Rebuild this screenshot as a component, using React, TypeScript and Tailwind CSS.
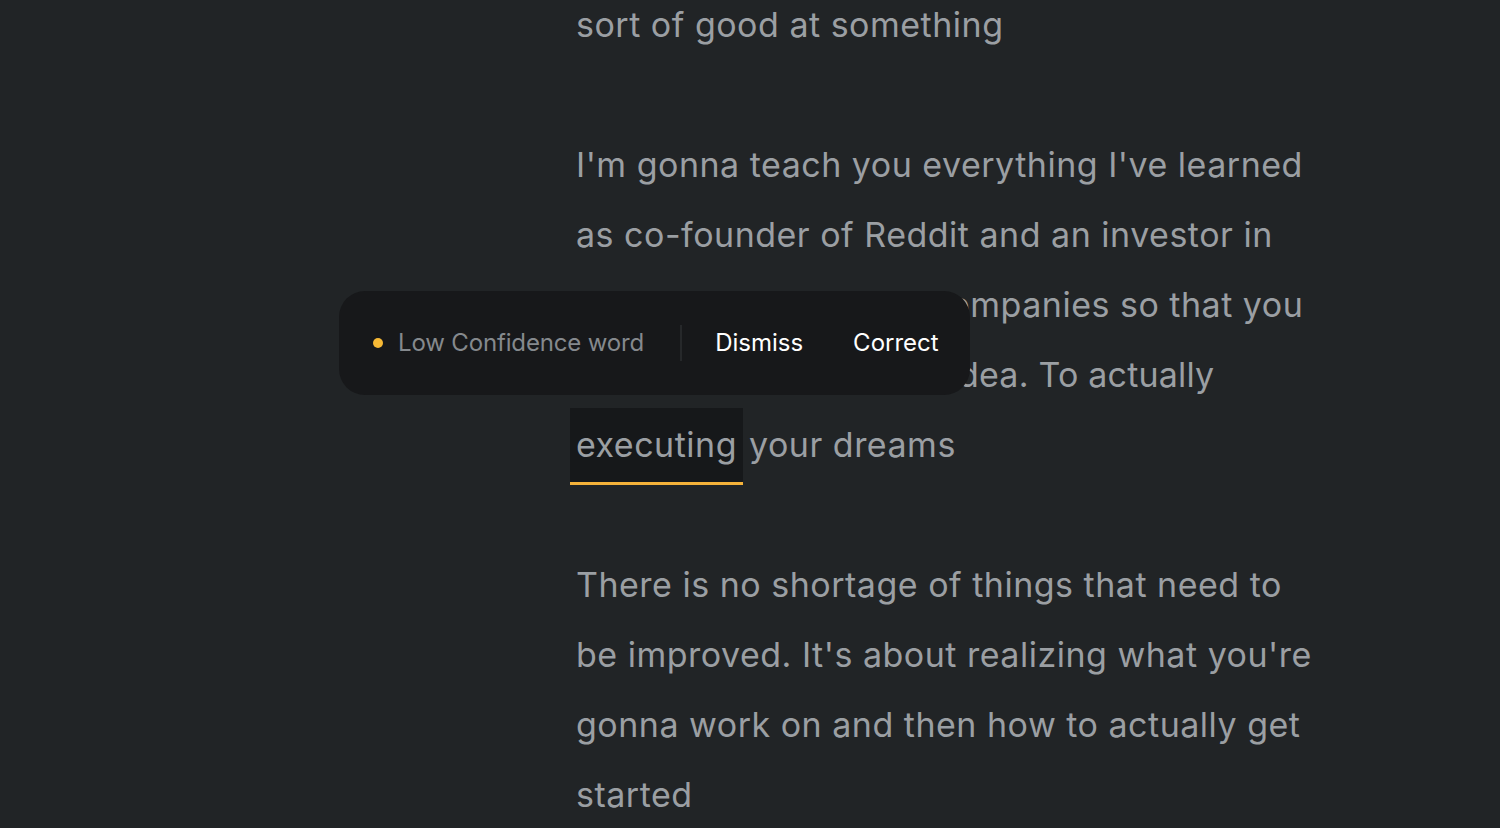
import React from "react";

const P1 = ["sort of good at something"];
const P2a = [
  "I'm gonna teach you everything I've learned",
  "as co-founder of Reddit and an investor in",
  "thousands of startup companies so that you",
];
const P3 = [
  "There is no shortage of things that need to",
  "be improved. It's about realizing what you're",
  "gonna work on and then how to actually get",
  "started",
];

function Line({ children }: { children: React.ReactNode }) {
  return <div className="h-[70px] leading-[70px] whitespace-nowrap">{children}</div>;
}

export default function App() {
  return (
    <div
      className="relative w-[1500px] h-[828px] overflow-hidden bg-[#212426] text-[#9b9fa3]"
      style={{ fontFamily: "Inter, 'Noto Sans', sans-serif" }}
    >
      <div className="pl-[576px] -mt-[10px] text-[34px] tracking-[0.5px]">
        {P1.map((l) => (
          <Line key={l}>{l}</Line>
        ))}
        <Line>{""}</Line>
        {P2a.map((l) => (
          <Line key={l}>{l}</Line>
        ))}
        <div className="h-[70px] leading-[70px] whitespace-nowrap tracking-[0.2px]">
          can go from having an idea. To actually
        </div>
        <Line>
          <span className="relative -top-[2px] -ml-[6px] mr-[6px] inline-block align-top h-[77px] leading-[74px] bg-[#16181a] px-[6px] border-b-[3px] border-[#f4b23a]">
            executing
          </span>
          your dreams
        </Line>
        <Line>{""}</Line>
        {P3.map((l) => (
          <Line key={l}>{l}</Line>
        ))}
      </div>

      <div className="absolute left-[339px] top-[291px] h-[104px] w-[631px] rounded-[26px] bg-[#17181a] flex items-center">
        <div className="flex items-center pl-[34px]">
          <span className="h-[10px] w-[10px] rounded-full bg-[#f7b935]" />
          <span className="ml-[15px] text-[24px] tracking-[-0.15px] text-[#85898d]">Low Confidence word</span>
          <span className="ml-[36px] h-[36px] w-[2px] bg-[#26282a]" />
          <span className="ml-[33px] text-[24px] text-white">Dismiss</span>
          <span className="ml-[50px] text-[24px] text-white">Correct</span>
        </div>
      </div>
    </div>
  );
}
